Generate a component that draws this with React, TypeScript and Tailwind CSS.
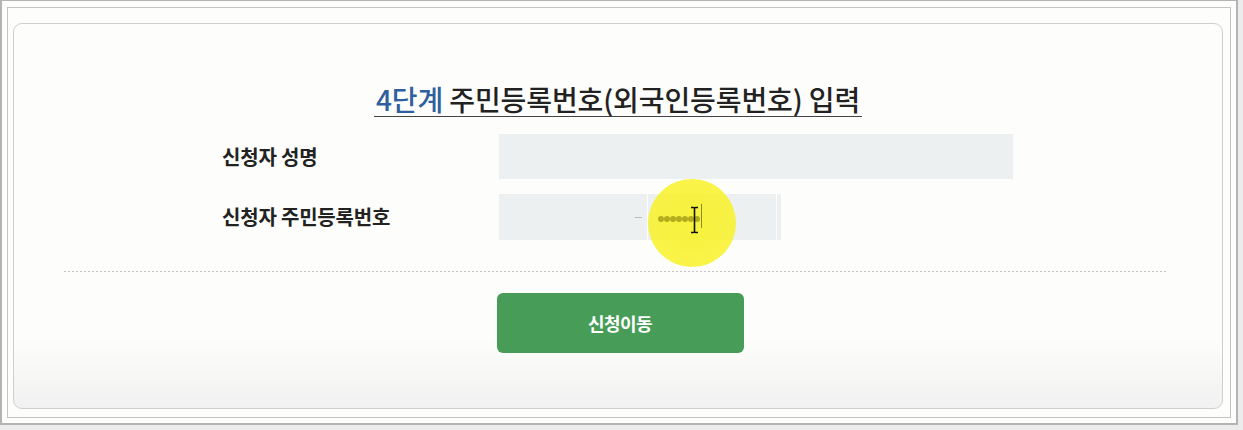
import React from "react";

export default function App() {
  const font = { fontFamily: '"Noto Sans CJK KR", "Noto Sans", sans-serif' };
  return (
    <div className="w-[1243px] h-[430px] bg-[#ececec] overflow-hidden" style={font}>
      <div className="w-[1238px] h-[425px] bg-[#fdfdfb] border-t border-l-2 border-r-2 border-b-2 border-[#b3b3b3] pl-[5px] pt-[6px] pr-[5px] pb-[5px]">
        <div className="w-full h-full border border-[#c4c4c4] pl-[5px] pt-[15px] pr-[7px] pb-[8px]">
          <div className="w-full h-full rounded-[9px] border border-[#cfcfcf] bg-[linear-gradient(to_bottom,#fdfdfb_0%,#fdfdfb_82%,#f1f1f1_100%)] flex flex-col items-center">
            <div className="mt-[59px] inline-block border-b border-[#444] px-[2px] text-[28px] leading-[33px] font-medium tracking-[-0.1px] text-[#222]">
              <span className="text-[#2f5f9e]">4단계</span> 주민등록번호(외국인등록번호) 입력
            </div>
            <div className="mt-[17px] w-full flex flex-col gap-[15px] pl-[208px]">
              <div className="flex items-center h-[45px]">
                <div className="w-[277px] text-[20px] font-bold tracking-[-0.2px] text-[#222]">신청자 성명</div>
                <div className="w-[514px] h-[45px] bg-[#edf0f1]"></div>
              </div>
              <div className="flex items-center h-[46px]">
                <div className="w-[277px] text-[20px] font-bold tracking-[-0.2px] text-[#222]">신청자 주민등록번호</div>
                <div className="flex h-[46px] gap-[1px]">
                  <div className="w-[148px] h-full bg-[#edf0f1] flex items-center justify-end pr-[5px]">
                    <span className="w-[7px] h-[1px] bg-[#b9bcbe]"></span>
                  </div>
                  <div className="relative w-[128px] h-full bg-[#edf0f1]">
                    <div className="absolute left-[0px] top-[-15px] w-[88px] h-[88px] rounded-full bg-[radial-gradient(circle,rgba(248,242,40,0.9)_0%,rgba(248,242,40,0.85)_70%,rgba(248,242,40,0)_100%)]"></div>
                    <div className="absolute left-[10px] top-[22px] flex gap-[0.5px]">
                      {Array.from({ length: 7 }).map((_, i) => (
                        <span key={i} className="w-[5.5px] h-[5.5px] rounded-full bg-[#b3ad1e]"></span>
                      ))}
                    </div>
                    <div className="absolute left-[53px] top-[10px] w-[1px] h-[24px] bg-[#8d8a30]"></div>
                    <svg className="absolute left-[42px] top-[12px]" width="9" height="28" viewBox="0 0 9 28">
                      <path d="M1 1.5 H3.5 Q4.5 1.5 4.5 3 V25 Q4.5 26.5 3.5 26.5 H1 M8 1.5 H5.5 Q4.5 1.5 4.5 3 M4.5 25 Q4.5 26.5 5.5 26.5 H8" fill="none" stroke="#111" strokeWidth="1.6" />
                    </svg>
                  </div>
                  <div className="w-[4px] h-full bg-[#edf0f1]"></div>
                </div>
              </div>
            </div>
            <div className="mt-[31px] self-start ml-[50px] w-[1103px] h-[1px] bg-[linear-gradient(to_right,#c4c4c4_50%,transparent_50%)] bg-[length:4px_1px]"></div>
            <button className="mt-[21px] ml-[4px] w-[247px] h-[60px] rounded-[6px] bg-[#479d58] text-white text-[18px] font-bold tracking-[-0.5px]">
              신청이동
            </button>
          </div>
        </div>
      </div>
    </div>
  );
}
